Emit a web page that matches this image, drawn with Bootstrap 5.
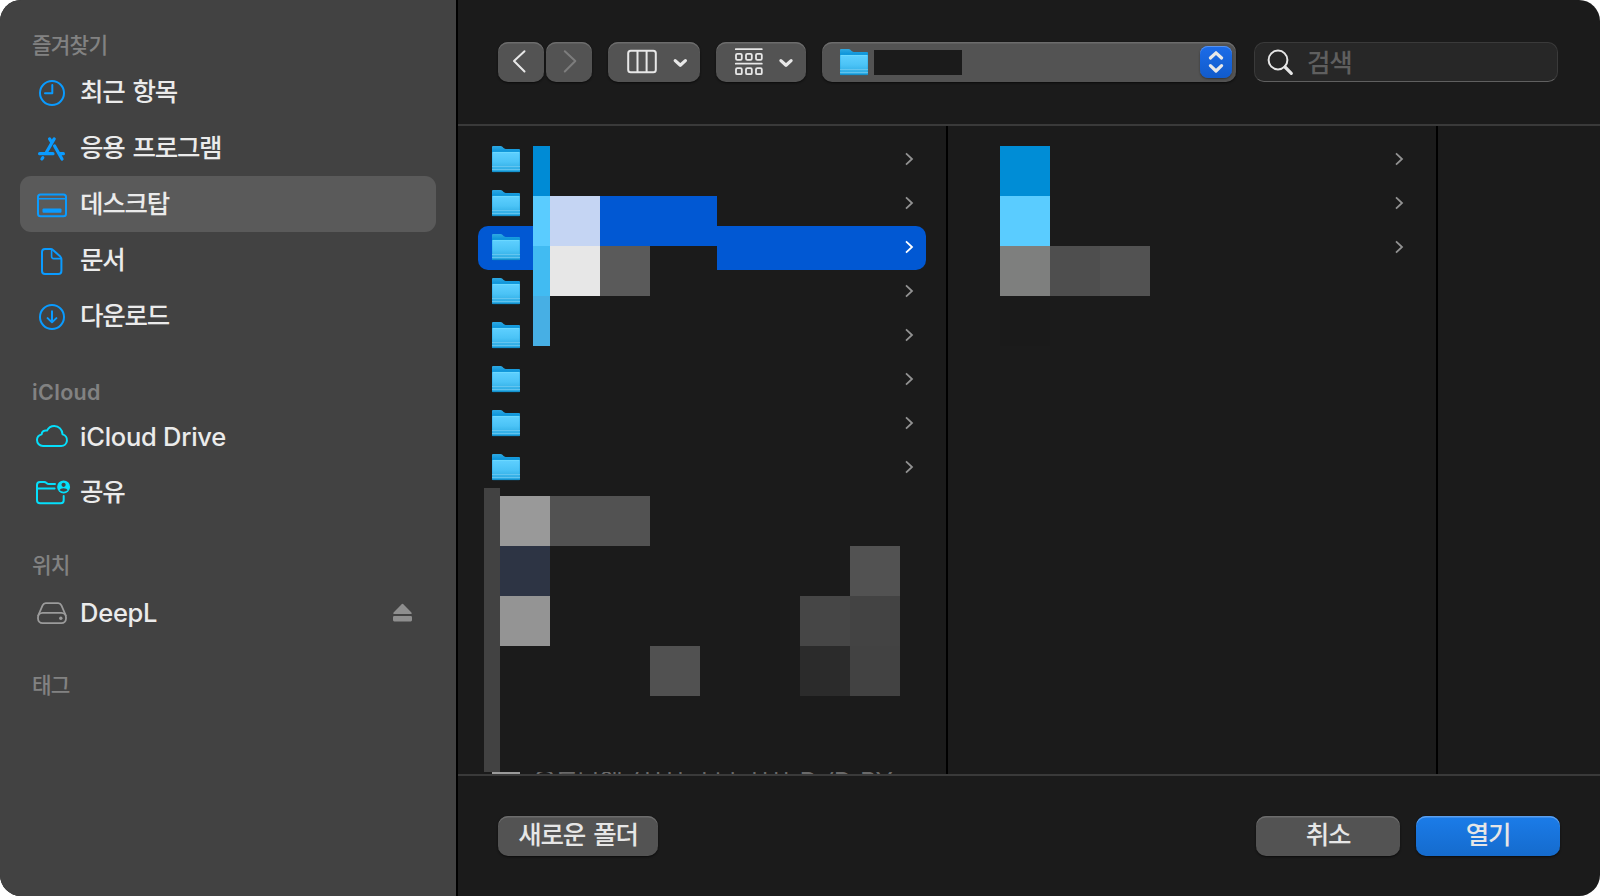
<!DOCTYPE html>
<html lang="ko">
<head>
    <meta charset="UTF-8">
    <meta name="viewport" content="width=device-width, initial-scale=1.0">
    <title>열기</title>
    <link href="https://cdn.jsdelivr.net/npm/bootstrap@5.3.0/dist/css/bootstrap.min.css" rel="stylesheet">
    <style>
        body { background: #fff; font-family: Inter, "Noto Sans CJK KR", sans-serif; overflow: hidden; }
        svg { display: block; flex-shrink: 0; }
        .stroke { fill: none; stroke: currentColor; stroke-width: 2; stroke-linecap: round; stroke-linejoin: round; }
        .stroke.thin { stroke-width: 1.8; }
        .stroke.bold { stroke-width: 3.2; }

        .dialog { width: 1600px; height: 896px; border-radius: 21px; background: #1b1b1b; color: #e6e6e6; }

        /* sidebar */
        .sidebar { width: 458px; padding: 28px 20px 0; background: #424242; border-right: 2px solid #000; }
        .section { margin-bottom: 28px; }
        .section-title { height: 36px; line-height: 34px; padding-left: 12px; font-size: 21.3px; font-weight: 500; letter-spacing: -.8px; color: #828282; }
        .section-title.latin { font-weight: 600; font-size: 21.5px; line-height: 36px; letter-spacing: .35px; padding-top: 2px; }
        .place { height: 56px; padding: 0 24px 0 14px; border-radius: 11px; color: #ebebeb; text-decoration: none; font-size: 25.5px; font-weight: 500; letter-spacing: -1.25px; word-spacing: 2.5px; line-height: 56px; }
        .place .name { margin-left: 10px; height: 56px; }
        .place.latin { font-size: 25.5px; letter-spacing: -.25px; word-spacing: 0; line-height: 58px; font-weight: 500; }
        .place.current { background: #5a5a5a; }
        .blue { color: #0a9bff; }
        .cyan { color: #05dffb; }
        .gray { color: #9b9b9b; }

        /* toolbar */
        .toolbar { height: 126px; padding: 42px 42px 0 40px; border-bottom: 2px solid #3a3a3a; }
        .tool { height: 40px; border-radius: 10px; background: #535353; box-shadow: inset 0 1.5px 0 #6c6c6c, 0 1px 2px #0c0c0c; color: #e8e8e8; border: 0; padding: 0; }
        .tool.forward { margin-left: 2px; color: #7d7d7d; }
        .path-box { width: 414px; padding: 0 4px 0 18px; }
        .path-box .folder-icon { margin-top: 2px; }
        .path-name { width: 88px; height: 25px; margin-left: 6px; background: #1b1b1b; }
        .stepper { width: 32px; height: 32px; border-radius: 8px; background: linear-gradient(#1c6ce9, #115bcb); box-shadow: inset 0 1px 0 #5893f0, 0 1px 2px #333; }
        .search { width: 304px; height: 40px; padding-left: 12px; border-radius: 10px; background: #272727; border: 1px solid #3a3a3a; border-bottom-color: #606060; }
        .search input { background: none; border: 0; outline: 0; width: 220px; height: 38px; padding: 2px 0 0; margin-left: 12px; color: #e6e6e6; font-size: 25.5px; letter-spacing: -1.2px; font-weight: 500; }
        .search input::placeholder { color: #5f5f5f; opacity: 1; }

        /* browser columns */
        .columns { height: 648px; }
        .pane { width: 490px; padding: 12px 20px 0; border-right: 2px solid #000; overflow: hidden; }
        .item { height: 44px; padding: 0 12px 0 14px; border-radius: 10px; color: #929292; }
        .item.selected { background: #0158d3; color: #fff; }
        .cut-row { height: 2px; overflow: hidden; padding-left: 14px; }
        .cut-icon { width: 28px; height: 2px; background: #9a9a9a; }
        .cut-name { margin-left: 13px; font-size: 25.5px; line-height: 34px; margin-top: -7px; letter-spacing: -1.2px; word-spacing: 3px; color: #6a6a6a; white-space: nowrap; }
        .mosaic { position: absolute; left: 0; top: 0; pointer-events: none; shape-rendering: crispEdges; }

        /* footer */
        .actions { height: 122px; padding: 40px 40px 0; border-top: 2px solid #3a3a3a; }
        .action { width: 144px; height: 40px; border: 0; border-radius: 10px; padding: 0 0 2px; background: #535353; box-shadow: inset 0 1.5px 0 #6c6c6c, 0 1px 2px #0c0c0c; color: #e6e6e6; font-size: 25.5px; line-height: 36px; letter-spacing: -1.2px; word-spacing: 2.5px; font-weight: 500; }
        .action.wide { width: 160px; }
        .action.main { background: linear-gradient(#1b7ce9, #156bcd); box-shadow: inset 0 1.5px 0 #5b9fee, 0 1px 2px #0c0c0c; }
    </style>
</head>
<body>

<!-- shared symbols -->
<svg width="0" height="0" class="position-absolute">
    <defs>
        <linearGradient id="front" x1="0" y1="0" x2="0" y2="1">
            <stop offset="0" stop-color="#5fd0ff"/>
            <stop offset=".5" stop-color="#4bc3f6"/>
            <stop offset="1" stop-color="#27a5de"/>
        </linearGradient>
        <linearGradient id="back" x1="0" y1="0" x2="0" y2="1">
            <stop offset="0" stop-color="#2fa9e2"/>
            <stop offset=".25" stop-color="#0590d8"/>
        </linearGradient>
        <symbol id="folder" viewBox="0 .5 28 28">
            <path d="M0 1.5Q0 .5 1 .5H8.5Q9.6.5 10.4 1.3L11.6 2.6Q12.4 3.4 13.6 3.4H27Q28 3.4 28 4.4V25.5Q28 26.5 27 26.5H1Q0 26.5 0 25.5Z" fill="url(#back)"/>
            <path d="M.2 7.4Q.2 6.4 1.2 6.4H26.8Q27.8 6.4 27.8 7.4V25.5Q27.8 26.4 26.8 26.4H1.2Q.2 26.4 .2 25.5Z" fill="url(#front)"/>
            <path d="M.5 6.9H27.5" stroke="#74deff" stroke-width=".7"/>
            <path d="M0 21H28M0 24H28" stroke="#6dc9f0" stroke-width=".8"/>
            <path d="M.6 26.2H27.4" stroke="#0a84c0" stroke-width=".8"/>
        </symbol>
        <symbol id="more" viewBox="0 1 10 16">
            <path d="M2 2.3 8 8 2 13.7" fill="none" stroke="currentColor" stroke-width="1.8"/>
        </symbol>
    </defs>
</svg>

<div class="dialog d-flex overflow-hidden position-relative">

    <nav class="sidebar flex-shrink-0">
        <div class="section">
            <div class="section-title">즐겨찾기</div>
            <a class="place d-flex align-items-center">
                <svg class="blue" width="36" height="32"><g class="stroke"><circle cx="18" cy="17" r="12"/><path d="M18.3 9V17.3H11"/></g></svg>
                <span class="name">최근 항목</span>
            </a>
            <a class="place d-flex align-items-center">
                <svg class="blue" width="36" height="32"><path class="stroke bold" d="M20.2 6.9 12.3 20.5M15.6 6.9 17.5 10M20.6 14 28 27M5.6 21.7H19M25.5 21.7H29.4M8.8 25.6 7.9 27"/></svg>
                <span class="name">응용 프로그램</span>
            </a>
            <a class="place current d-flex align-items-center">
                <svg class="blue" width="36" height="32"><g class="stroke"><rect x="4" y="6.5" width="28" height="21.7" rx="2.5"/><path d="M4 10.8H32" stroke-width="1.6"/></g><rect x="8.5" y="20.6" width="19" height="4.2" rx="1" fill="currentColor"/></svg>
                <span class="name">데스크탑</span>
            </a>
            <a class="place d-flex align-items-center">
                <svg class="blue" width="36" height="32"><g class="stroke"><path d="M11 5H16.5Q18 5 19 6L26.3 12.6Q27.4 13.7 27.4 15V27Q27.4 30 24.4 30H11Q8 30 8 27V8Q8 5 11 5Z"/><path d="M17.6 5.5V12.6Q17.6 14.6 19.6 14.6H27" stroke-width="1.6"/></g></svg>
                <span class="name">문서</span>
            </a>
            <a class="place d-flex align-items-center">
                <svg class="blue" width="36" height="32"><g class="stroke"><circle cx="18" cy="17" r="12"/><path d="M18 11.3V22.2M13.6 18.1 18 22.4 22.4 18.1"/></g></svg>
                <span class="name">다운로드</span>
            </a>
        </div>

        <div class="section">
            <div class="section-title latin">iCloud</div>
            <a class="place latin d-flex align-items-center">
                <svg class="cyan" width="36" height="32"><path class="stroke" d="M9 26H27.2A5.9 5.9 0 0 0 28.6 14.4C28.3 9.6 24.8 6 20.3 6C17 6 14.4 7.8 13 10.6C10.2 9.9 7.8 11.6 7.6 14.4C4.9 15.1 3 17.3 3 20.1C3 23.4 5.6 26 9 26Z"/></svg>
                <span class="name">iCloud Drive</span>
            </a>
            <a class="place d-flex align-items-center">
                <svg class="cyan overflow-visible" width="36" height="32">
                    <path class="stroke" d="M21 8H14.8Q13.6 8 12.8 7.2L12.2 6.7Q11.4 6 10.2 6H6Q3 6 3 9V24.2Q3 27.2 6 27.2H26.7Q29.7 27.2 29.7 24.2V20M3 12.6H20.6"/>
                    <circle cx="29.6" cy="10.9" r="6.5" fill="currentColor"/>
                    <circle cx="29.6" cy="8.8" r="2.1" fill="#424242"/>
                    <path d="M25.6 14.3C26.2 11.6 33 11.6 33.6 14.3Q29.6 17 25.6 14.3Z" fill="#424242"/>
                </svg>
                <span class="name">공유</span>
            </a>
        </div>

        <div class="section">
            <div class="section-title">위치</div>
            <a class="place latin d-flex align-items-center">
                <svg class="gray" width="36" height="32"><g class="stroke thin"><path d="M4.2 19.5 8.6 9.4Q9.6 7.2 11.8 7.2H24.2Q26.4 7.2 27.4 9.4L31.8 19.5"/><rect x="4" y="16.8" width="28" height="10.4" rx="4.6"/></g><circle cx="26.8" cy="22.3" r="1.7" fill="currentColor"/></svg>
                <span class="name">DeepL</span>
                <svg class="gray ms-auto" width="19" height="20"><path d="M1 12Q-.3 12 .6 10.6L8.4 2.4Q9.5 1.3 10.6 2.4L18.4 10.6Q19.3 12 18 12Z" fill="#8e8e8e"/><rect y="14" width="19" height="5.4" rx="1.3" fill="#8e8e8e"/></svg>
            </a>
        </div>

        <div class="section-title">태그</div>
    </nav>

    <main class="d-flex flex-column flex-grow-1">
        <header class="toolbar d-flex flex-shrink-0">
            <button class="tool"><svg width="46" height="40"><path class="stroke" d="M26.5 9.3 16 19 26.5 29.5"/></svg></button>
            <button class="tool forward"><svg width="46" height="40"><path class="stroke" d="M18.8 9.3 29.3 19 18.8 29.5"/></svg></button>
            <button class="tool ms-3">
                <svg width="92" height="40"><g class="stroke"><rect x="20.2" y="8.8" width="27.6" height="21.4" rx="2.5"/><path d="M29.5 9V30M38.6 9V30"/></g><path class="stroke bold" d="M67.2 18.6 72.3 23.3 77.4 18.6"/></svg>
            </button>
            <button class="tool ms-3">
                <svg width="90" height="40"><g class="stroke thin"><path d="M19.8 7.2H45.8M19.8 21.7H45.8"/><rect x="20" y="11.8" width="5.8" height="6" rx="1.3"/><rect x="30" y="11.8" width="5.8" height="6" rx="1.3"/><rect x="40" y="11.8" width="5.8" height="6" rx="1.3"/><rect x="20" y="26.2" width="5.8" height="6" rx="1.3"/><rect x="30" y="26.2" width="5.8" height="6" rx="1.3"/><rect x="40" y="26.2" width="5.8" height="6" rx="1.3"/></g><path class="stroke bold" d="M64.9 18.6 70 23.3 75.1 18.6"/></svg>
            </button>
            <div class="tool path-box ms-3 d-flex align-items-center">
                <svg class="folder-icon" width="28" height="28"><use href="#folder"/></svg>
                <span class="path-name"></span>
                <span class="stepper ms-auto"><svg width="32" height="32"><path class="stroke bold" d="M10.4 12 16 6.8 21.6 12M10.4 19.6 16 25 21.6 19.6"/></svg></span>
            </div>
            <div class="search ms-auto d-flex align-items-center">
                <svg width="28" height="30"><circle class="stroke" cx="11" cy="13" r="9.4"/><path class="stroke bold" d="M18 20 24.3 26.3"/></svg>
                <input type="text" placeholder="검색">
            </div>
        </header>

        <div class="columns d-flex flex-shrink-0">
            <div class="pane flex-shrink-0 d-flex flex-column">
                <div id="folders"></div>
                <div class="cut-row d-flex mt-auto">
                    <span class="cut-icon"></span>
                    <span class="cut-name">응트나앱 (시서 ㅣ나 시사 D (D BY</span>
                </div>
            </div>
            <div class="pane flex-shrink-0"><div id="subfolders"></div></div>
        </div>

        <footer class="actions d-flex">
            <button class="action wide">새로운 폴더</button>
            <button class="action ms-auto">취소</button>
            <button class="action main ms-3">열기</button>
        </footer>
    </main>

    <!-- pixelated cover over the file names -->
    <svg id="mosaic" class="mosaic" width="1600" height="896"></svg>
</div>

<script src="https://cdn.jsdelivr.net/npm/bootstrap@5.3.0/dist/js/bootstrap.bundle.min.js"></script>
<script>
    function addRows(id, count, selected, icon) {
        let html = "";
        for (let i = 0; i < count; i++) {
            html += `<div class="item d-flex align-items-center ${i === selected ? "selected" : ""}">
                ${icon ? '<svg width="28" height="28"><use href="#folder"/></svg>' : ""}
                <svg class="ms-auto" width="10" height="16"><use href="#more"/></svg>
            </div>`;
        }
        document.getElementById(id).innerHTML = html;
    }
    addRows("folders", 8, 2, true);
    addRows("subfolders", 3, -1, false);

    // x, y, width, height, colour
    const tiles = [
        [550, 146, 167, 50, "#1b1b1b"],
        [650, 246, 67, 50, "#1b1b1b"],
        [533, 146, 17, 50, "#008bd5"],
        [533, 196, 17, 50, "#5accff"],
        [533, 246, 17, 50, "#41bbf2"],
        [533, 296, 17, 50, "#47afe4"],
        [550, 196, 50, 50, "#c5d5f3"],
        [600, 196, 117, 50, "#0158d3"],
        [550, 246, 50, 50, "#e7e7e7"],
        [600, 246, 50, 50, "#5a5a5a"],
        [484, 488, 16, 284, "#424242"],
        [500, 496, 50, 50, "#999999"],
        [550, 496, 100, 50, "#525252"],
        [500, 546, 50, 50, "#2d3444"],
        [500, 596, 50, 50, "#949494"],
        [650, 646, 50, 50, "#515151"],
        [850, 546, 50, 50, "#525252"],
        [800, 596, 50, 50, "#464646"],
        [850, 596, 50, 50, "#434343"],
        [800, 646, 50, 50, "#2b2b2b"],
        [850, 646, 50, 50, "#424242"],
        [1000, 146, 50, 50, "#008dd6"],
        [1000, 196, 50, 50, "#5accff"],
        [1000, 246, 50, 50, "#7e7f7e"],
        [1050, 246, 50, 50, "#4e4e4e"],
        [1100, 246, 50, 50, "#525252"],
        [1000, 296, 50, 50, "#1a1a1a"]
    ];
    document.getElementById("mosaic").innerHTML = tiles.map(t =>
        `<rect x="${t[0]}" y="${t[1]}" width="${t[2]}" height="${t[3]}" fill="${t[4]}"/>`).join("");
</script>

</body>
</html>
